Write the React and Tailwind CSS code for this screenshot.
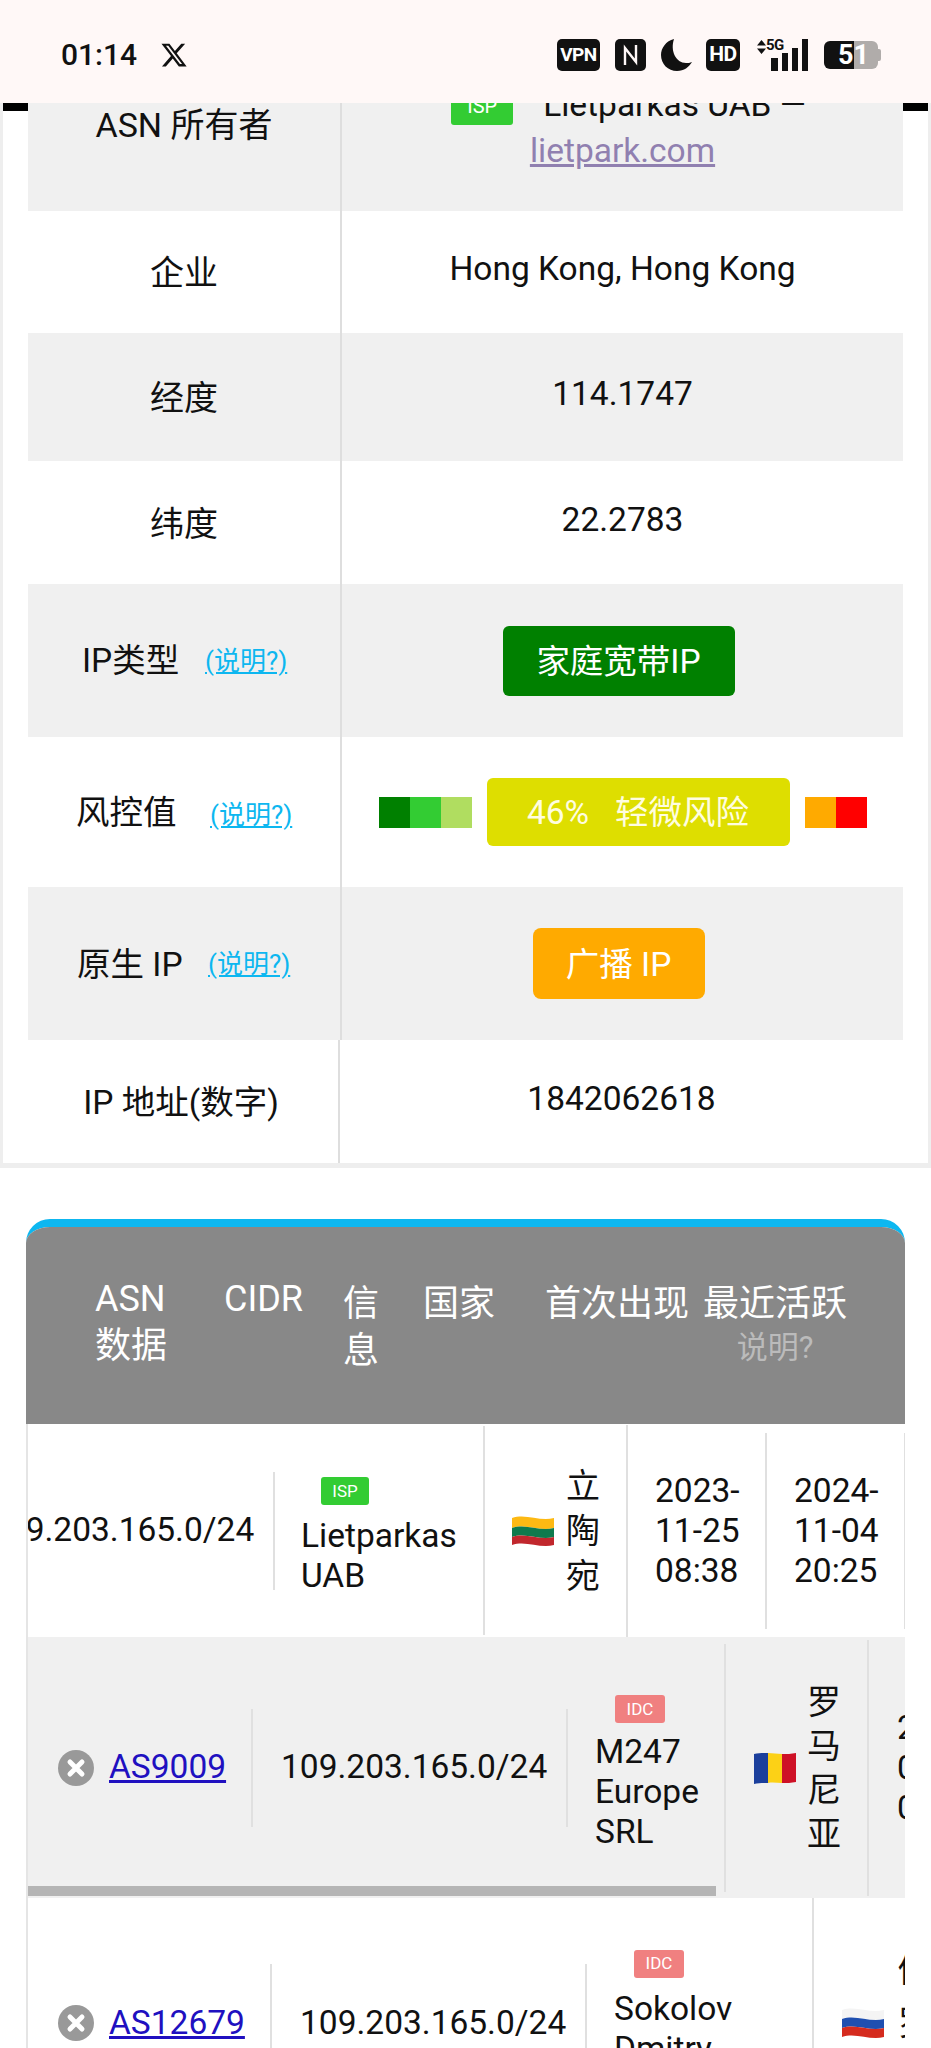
import { FaXTwitter } from 'react-icons/fa6';

function StatusBar() {
    return (
        <div className="h-[103px] bg-[#fff8f7] flex items-center pl-[61px] pt-[8px] text-[#111] relative z-10">
            <span className="text-[30px] font-medium leading-none w-[99px] -mt-[2px]">01:14</span>
            <FaXTwitter className="w-[28px] h-[28px] -mt-[2px]" />
            <div className="ml-[369px] flex items-center h-[32px] -mt-[1px]">
                <div className="w-[43px] h-[32px] bg-[#111] rounded-[5px] flex items-center justify-center text-white text-[19px] font-bold tracking-[-0.5px]">VPN</div>
                <svg className="ml-[15px] w-[31px] h-[32px]" viewBox="0 0 31 32">
                    <rect width="31" height="32" rx="5" fill="#111" />
                    <path d="M10 26V9l11 14V6" fill="none" stroke="#fff8f7" strokeWidth="2.4" />
                </svg>
                <svg className="ml-[15px] w-[31px] h-[32px]" viewBox="0 0 31 32">
                    <path d="M13 0C5 2 0 9 0 16c0 9 7 16 16 16 7 0 12-4 15-9-2 1-4 1-6 1C15 24 9 12 13 0z" fill="#111" />
                </svg>
                <div className="ml-[14px] w-[34px] h-[32px] bg-[#111] rounded-[5px] flex items-center justify-center text-white text-[21px] font-bold tracking-[-0.5px]">HD</div>
                <svg className="ml-[17px] w-[9px] h-[14px] -mt-[16px]" viewBox="0 0 9 14">
                    <path d="M4.500 0L9 5.500H0zM4.500 14L0 8.500h9z" fill="#111" />
                </svg>
                <div className="relative w-[45px] h-[32px] -ml-px">
                    <span className="absolute left-[1px] -top-[3px] text-[15px] font-bold leading-[18px] tracking-[-0.5px]">5G</span>
                    <div className="absolute inset-0 flex items-end pl-[6px] gap-[4px]">
                        <div className="w-[7px] h-[13px] bg-[#111]" />
                        <div className="w-[6px] h-[18px] bg-[#111]" />
                        <div className="w-[6px] h-[23px] bg-[#111]" />
                        <div className="w-[6px] h-[32px] bg-[#111]" />
                    </div>
                </div>
                <div className="ml-[14px] relative w-[57px] h-[28px] flex">
                    <div className="w-[30px] bg-[#111] rounded-l-[6px]" />
                    <div className="w-[24px] bg-[#b0acaa] rounded-r-[6px]" />
                    <div className="w-[3px] h-[12px] my-auto bg-[#b0acaa] rounded-r-[2px]" />
                    <span className="absolute left-[14px] top-0 leading-[28px] text-[27px] font-bold text-white">51</span>
                </div>
            </div>
        </div>
    );
}

function HelpLink({ className = '' }) {
    return <a className={`text-[26px] leading-[32px] text-[#0db7f0] underline whitespace-nowrap ${className}`}>(说明?)</a>;
}

function InfoRow({ label, value, gray, height, labelClass = 'w-[312px]', dividerClass = 'border-[#dedede]' }) {
    return (
        <div className={`flex ${height} ${gray ? 'bg-[#f0f0f0]' : 'bg-white'}`}>
            <div className={`shrink-0 flex items-center justify-center ${labelClass}`}>{label}</div>
            <div className={`flex-1 border-l-2 flex items-center justify-center ${dividerClass}`}>{value}</div>
        </div>
    );
}

function Badge({ kind }) {
    const color = kind === 'ISP' ? 'bg-[#33cc33]' : 'bg-[#f08080]';
    const width = kind === 'ISP' ? 'w-[48px]' : 'w-[50px]';
    return (
        <div className={`${color} ${width} ml-[20px] h-[28px] rounded-[3px] flex items-center justify-center text-[17px] leading-none text-white`}>{kind}</div>
    );
}

function CloseDot() {
    return (
        <svg className="w-[36px] h-[36px] shrink-0" viewBox="0 0 36 36">
            <circle cx="18" cy="18" r="18" fill="#999" />
            <path d="M12 12l12 12M24 12L12 24" stroke="#fff" strokeWidth="5" strokeLinecap="round" />
        </svg>
    );
}

function LtFlag() {
    return (
        <svg className="w-[42px] h-[32px] shrink-0" viewBox="0 0 42 32">
            <path d="M0 3c14-5 28 4 42 0v10c-14 4-28-5-42 0z" fill="#fdb913" />
            <path d="M0 13c14-5 28 4 42 0v9c-14 4-28-5-42 0z" fill="#0f7a4d" />
            <path d="M0 22c14-5 28 4 42 0v8c-14 4-28-5-42 0z" fill="#c1272d" />
        </svg>
    );
}

function RoFlag() {
    return (
        <svg className="w-[42px] h-[32px] shrink-0" viewBox="0 0 42 32">
            <path d="M0 2c5-1 9-1 14-1v30c-5 0-9 0-14 1z" fill="#1b3f9c" />
            <path d="M14 1c5 0 9 1 14 1v29c-5 0-9-1-14 0z" fill="#fcd116" />
            <path d="M28 2c5 0 9 0 14-1v29c-5 1-9 1-14 1z" fill="#ce1126" />
        </svg>
    );
}

function RuFlag() {
    return (
        <svg className="w-[42px] h-[32px] shrink-0" viewBox="0 0 42 32">
            <path d="M0 3c14-5 28 4 42 0v9c-14 4-28-5-42 0z" fill="#f4f4f4" />
            <path d="M0 12c14-5 28 4 42 0v9c-14 4-28-5-42 0z" fill="#1f4fb0" />
            <path d="M0 21c14-5 28 4 42 0v9c-14 4-28-5-42 0z" fill="#d52b1e" />
        </svg>
    );
}

function IpCell({ children }) {
    return (
        <div className="w-[313px] h-[118px] shrink-0 border-r-2 border-[#e0e0e0] flex items-center pl-[26px] whitespace-nowrap">{children}</div>
    );
}

function DateCell({ lines }) {
    return (
        <div className="w-[139px] h-[196px] shrink-0 border-r-2 border-[#e0e0e0] flex flex-col justify-center pl-[27px] leading-[40px]">
            {lines.map(line => <span key={line}>{line}</span>)}
        </div>
    );
}

export default function App() {
    return (
        <div className="h-[2048px] overflow-hidden bg-white text-[33.5px] text-[#111] [font-family:Roboto,'Noto_Sans_CJK_SC',sans-serif]">
            <StatusBar />

            <section className="relative border-x-[3px] border-b-[5px] border-[#eeeeee] px-[25px]">
                <div className="absolute left-0 top-0 w-[25px] h-[8px] bg-black" />
                <div className="absolute right-0 top-0 w-[25px] h-[8px] bg-black" />

                {/* ASN row, top part sits under the status bar */}
                <div className="flex h-[108px] bg-[#f0f0f0] overflow-hidden">
                    <div className="w-[312px] shrink-0 text-center text-[34px] leading-[46px] -mt-[1px]">ASN 所有者</div>
                    <div className="flex-1 border-l-2 border-[#dedede] text-center leading-[46px] -mt-[21px]">
                        <div className="flex items-center justify-center gap-[30px] pl-[12px]">
                            <div className="w-[62px] h-[38px] bg-[#33cc33] rounded-[3px] mt-[2px] text-[20px] leading-[38px] text-white">ISP</div>
                            <span>Lietparkas UAB —</span>
                        </div>
                        <a className="text-[#9080b0] underline">lietpark.com</a>
                    </div>
                </div>

                <InfoRow height="h-[122px]" label={<span className="text-[34px] mt-[3px]">企业</span>} value={<span className="-mt-[5px]">Hong Kong, Hong Kong</span>} />
                <InfoRow gray height="h-[128px]" label={<span className="text-[34px] mt-[3px]">经度</span>} value={<span className="-mt-[5px]">114.1747</span>} />
                <InfoRow height="h-[123px]" label={<span className="text-[34px] mt-[3px]">纬度</span>} value={<span className="-mt-[5px]">22.2783</span>} />
                <InfoRow
                    gray
                    height="h-[153px]"
                    labelClass="w-[312px] !justify-start pl-[54px]"
                    label={<><span className="w-[123px] mt-[1px]">IP类型</span><HelpLink className="mt-[1px]" /></>}
                    value={<div className="w-[232px] h-[70px] mr-[8px] bg-[#008000] rounded-[6px] text-white flex items-center justify-center pt-[3px]">家庭宽带IP</div>}
                />
                <InfoRow
                    height="h-[150px]"
                    labelClass="w-[312px] !justify-start pl-[48px]"
                    label={<><span className="w-[134px] mt-[3px]">风控值</span><HelpLink className="mt-[6px]" /></>}
                    value={
                        <div className="flex items-center gap-[15px]">
                            <div className="flex h-[31px]">
                                <div className="w-[31px] bg-[#008000]" />
                                <div className="w-[31px] bg-[#33cc33]" />
                                <div className="w-[31px] bg-[#b0dd60]" />
                            </div>
                            <div className="w-[303px] h-[68px] bg-[#dede00] rounded-[6px] text-[#fffde0] flex items-center justify-center gap-[26px] pt-[3px]">
                                <span>46%</span><span>轻微风险</span>
                            </div>
                            <div className="flex h-[31px]">
                                <div className="w-[31px] bg-[#ffaa00]" />
                                <div className="w-[31px] bg-[#ff0000]" />
                            </div>
                        </div>
                    }
                />
                <InfoRow
                    gray
                    height="h-[153px]"
                    labelClass="w-[312px] !justify-start pl-[49px]"
                    label={<><span className="w-[131px] mt-[3px]">原生 IP</span><HelpLink className="mt-[1px]" /></>}
                    value={<div className="w-[172px] h-[71px] mr-[8px] bg-[#ffaa00] rounded-[8px] text-white flex items-center justify-center pt-[3px]">广播 IP</div>}
                />
                <InfoRow
                    height="h-[123px]"
                    labelClass="w-[310px] pr-[4px]"
                    label={<span className="mt-[3px]">IP 地址(数字)</span>}
                    value={<span className="-mt-[5px]">1842062618</span>}
                />
            </section>

            <section className="mt-[51px] mx-[26px] border-t-[8px] border-[#0db7f0] rounded-t-[24px] overflow-hidden">
                <div className="h-[197px] bg-[#888888] text-white text-[36px] leading-[47px] flex pl-[69px] pt-[49px]">
                    <div className="w-[129px] shrink-0">ASN<br />数据</div>
                    <div className="w-[119px] shrink-0">CIDR</div>
                    <div className="w-[80px] shrink-0 pt-[5px]">信<br />息</div>
                    <div className="w-[122px] shrink-0 pt-[5px]">国家</div>
                    <div className="w-[158px] shrink-0 pt-[5px] whitespace-nowrap">首次出现</div>
                    <div className="shrink-0 pt-[5px] flex flex-col items-center whitespace-nowrap">
                        <span>最近活跃</span>
                        <span className="text-[#bbbbbb] text-[31px] -mt-[4px]">说明?</span>
                    </div>
                </div>

                <div className="border-l-2 border-[#e5e5e5]">
                    {/* this row is scrolled sideways */}
                    <div className="h-[213px] bg-white overflow-hidden">
                        <div className="h-full flex items-center -ml-[310px] w-max">
                            <div className="w-[244px] shrink-0 flex items-center gap-[15px] pl-[30px]">
                                <CloseDot />
                                <a className="text-[#2010c0] underline">AS61272</a>
                            </div>
                            <IpCell>109.203.165.0/24</IpCell>
                            <div className="w-[210px] h-[209px] shrink-0 border-r-2 border-[#e0e0e0] flex items-center pl-[26px] leading-[40px]">
                                <div className="pt-[12px]">
                                    <Badge kind="ISP" />
                                    <div className="mt-[11px]">Lietparkas<br />UAB</div>
                                </div>
                            </div>
                            <div className="w-[143px] h-[212px] shrink-0 border-r-2 border-[#e0e0e0] flex items-center pl-[27px] gap-[12px]">
                                <LtFlag />
                                <div className="w-[34px] text-[34px] leading-[45px] pt-[2px]">立陶宛</div>
                            </div>
                            <DateCell lines={['2023-', '11-25', '08:38']} />
                            <DateCell lines={['2024-', '11-04', '20:25']} />
                        </div>
                    </div>

                    <div className="relative h-[261px] bg-[#f0f0f0] overflow-hidden flex items-center">
                        <div className="w-[225px] shrink-0 flex items-center gap-[15px] pl-[30px]">
                            <CloseDot />
                            <a className="text-[#2010c0] underline">AS9009</a>
                        </div>
                        <div className="w-0 h-[118px] border-l-2 border-[#e0e0e0] -ml-[2px] mr-[2px]" />
                        <IpCell>109.203.165.0/24</IpCell>
                        <div className="w-[158px] h-[248px] shrink-0 border-r-2 border-[#e0e0e0] flex items-center pl-[27px] leading-[40px]">
                            <div className="pt-[12px]">
                                <Badge kind="IDC" />
                                <div className="mt-[9px]">M247<br />Europe<br />SRL</div>
                            </div>
                        </div>
                        <div className="w-[143px] h-[256px] shrink-0 border-r-2 border-[#e0e0e0] flex items-center pl-[28px] gap-[11px]">
                            <RoFlag />
                            <div className="w-[34px] text-[34px] leading-[44px]">罗马尼亚</div>
                        </div>
                        <div className="shrink-0 pl-[28px] leading-[40px] flex flex-col">
                            <span>2023-</span><span>09-14</span><span>03:21</span>
                        </div>
                        <div className="absolute left-0 bottom-[2px] w-[688px] h-[10px] bg-[#b5b5b5]" />
                    </div>

                    <div className="h-[250px] bg-white overflow-hidden flex items-center">
                        <div className="w-[244px] shrink-0 flex items-center gap-[15px] pl-[30px]">
                            <CloseDot />
                            <a className="text-[#2010c0] underline">AS12679</a>
                        </div>
                        <div className="w-0 h-[118px] border-l-2 border-[#e0e0e0] -ml-[2px] mr-[2px]" />
                        <IpCell>109.203.165.0/24</IpCell>
                        <div className="w-[227px] h-full shrink-0 border-r-2 border-[#e0e0e0] flex items-center pl-[27px] leading-[40px]">
                            <div className="pt-[12px]">
                                <Badge kind="IDC" />
                                <div className="mt-[11px]">Sokolov<br />Dmitry<br />Pavlovich</div>
                            </div>
                        </div>
                        <div className="shrink-0 flex items-center pl-[28px] gap-[14px]">
                            <RuFlag />
                            <div className="w-[34px] text-[34px] leading-[53px]">俄罗斯</div>
                        </div>
                    </div>
                </div>
            </section>
        </div>
    );
}
